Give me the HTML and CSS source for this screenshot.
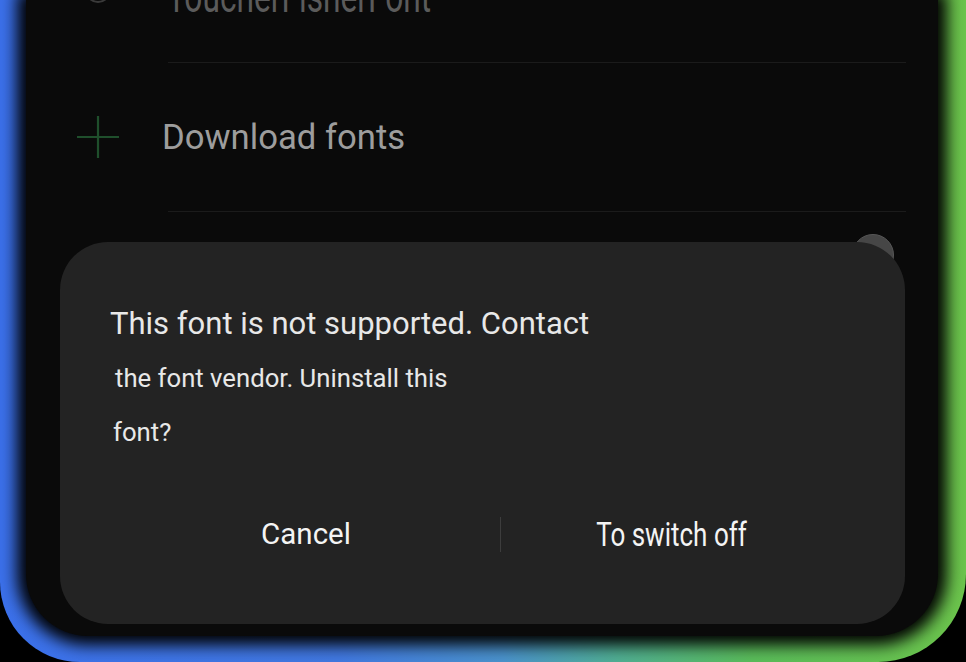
FILE: index.html
```html
<!DOCTYPE html>
<html lang="en">

<head>
    <meta charset="UTF-8">
    <meta name="viewport" content="width=device-width, initial-scale=1.0">
    <title>Font settings</title>
    <link rel="stylesheet" href="styles.css">
</head>

<body>
    <div class="frame">
        <div class="screen">
            <div class="list">
                <div class="row row-top">
                    <div class="row-icon">
                        <span class="radio"></span>
                    </div>
                    <span class="preview">ToucherFisherFont</span>
                </div>
                <div class="divider"></div>

                <div class="row row-download">
                    <div class="row-icon">
                        <svg class="plus" width="44" height="44" viewBox="0 0 44 44">
                            <path d="M22 1 V43 M1 22 H43" stroke="#1f4f2c" stroke-width="2.2" fill="none" />
                        </svg>
                    </div>
                    <span class="row-label">Download fonts</span>
                </div>
                <div class="divider"></div>

                <div class="row row-toggle">
                    <span class="knob"></span>
                </div>
            </div>

            <div class="dialog">
                <p class="msg msg-first">This font is not supported. Contact</p>
                <p class="msg msg-next">the font vendor. Uninstall this</p>
                <p class="msg msg-last">font?</p>

                <div class="actions">
                    <button class="btn btn-cancel">Cancel</button>
                    <span class="actions-sep"></span>
                    <button class="btn btn-off"><span>To switch off</span></button>
                </div>
            </div>
        </div>
    </div>
</body>

</html>
```

FILE: styles.css
```css
* {
    margin: 0;
    padding: 0;
    box-sizing: border-box;
}

body {
    background-color: #000;
    font-family: Roboto, "Noto Sans", sans-serif;
    overflow: hidden;
}

/* Glowing phone edge */
.frame {
    width: 966px;
    height: 662px;
    padding: 0 28px 26px 26px;
    border-radius: 0 0 88px 80px;
    overflow: hidden;
    background: linear-gradient(90deg, #3b70ea 0%, #4178e0 35%, #4a92cc 52%, #50ae92 64%, #5abc5a 78%, #6cc44c 100%);
}

.screen {
    position: relative;
    height: 100%;
    background-color: #0a0a0a;
    border-radius: 0 0 62px 62px;
    box-shadow: 0 0 16px 9px #000;
}

/* Settings list behind the dialog */
.row {
    display: flex;
    align-items: center;
}

.row-icon {
    width: 44px;
    margin-left: 50px;
    margin-right: 41px;
    display: flex;
    justify-content: center;
}

.row-top {
    height: 62px;
    align-items: flex-start;
}

.row-top .row-icon {
    margin-top: -23px;
}

.radio {
    width: 26px;
    height: 26px;
    border: 2px solid #3a3a3a;
    border-radius: 50%;
}

.preview {
    display: inline-block;
    margin-top: -25px;
    margin-left: 6px;
    font-size: 44px;
    line-height: 44px;
    color: #5b5b5b;
    transform: scaleX(0.72);
    transform-origin: left center;
    white-space: nowrap;
}

.divider {
    height: 1px;
    margin-left: 142px;
    margin-right: 32px;
    background-color: #1b1b1b;
}

.row-download {
    height: 148px;
}

.row-label {
    font-size: 34.7px;
    color: #9d9d9d;
    margin-left: 1px;
}

.row-toggle {
    height: 86px;
    justify-content: flex-end;
    padding-right: 44px;
}

.knob {
    width: 42px;
    height: 42px;
    border-radius: 50%;
    background-color: #464646;
    border: 1px solid #575757;
}

/* Dialog */
.dialog {
    position: absolute;
    left: 34px;
    right: 33px;
    bottom: 12px;
    height: 382px;
    padding: 62px 50px 0 50px;
    background-color: #232323;
    border-radius: 48px;
    color: #e8e8e8;
}

.msg-first {
    font-size: 31px;
    line-height: 40px;
}

.msg-next,
.msg-last {
    font-size: 25.7px;
    line-height: 54px;
}

.msg-next {
    margin-top: 7px;
    padding-left: 5px;
}

.msg-last {
    padding-left: 3px;
}

.actions {
    display: grid;
    grid-template-columns: 388px 1px 340px;
    margin-top: 45px;
    margin-left: 2px;
}

.btn {
    background: none;
    border: none;
    font-family: Roboto, "Noto Sans", sans-serif;
    color: #f4f4f4;
    line-height: 60px;
    text-align: center;
    cursor: pointer;
}

.btn-cancel {
    font-size: 29.5px;
}

.btn-off {
    font-size: 34px;
}

.btn-off span {
    display: inline-block;
    transform: scaleX(0.765);
}

.actions-sep {
    align-self: center;
    height: 35px;
    background-color: #3d3d3d;
}
```
